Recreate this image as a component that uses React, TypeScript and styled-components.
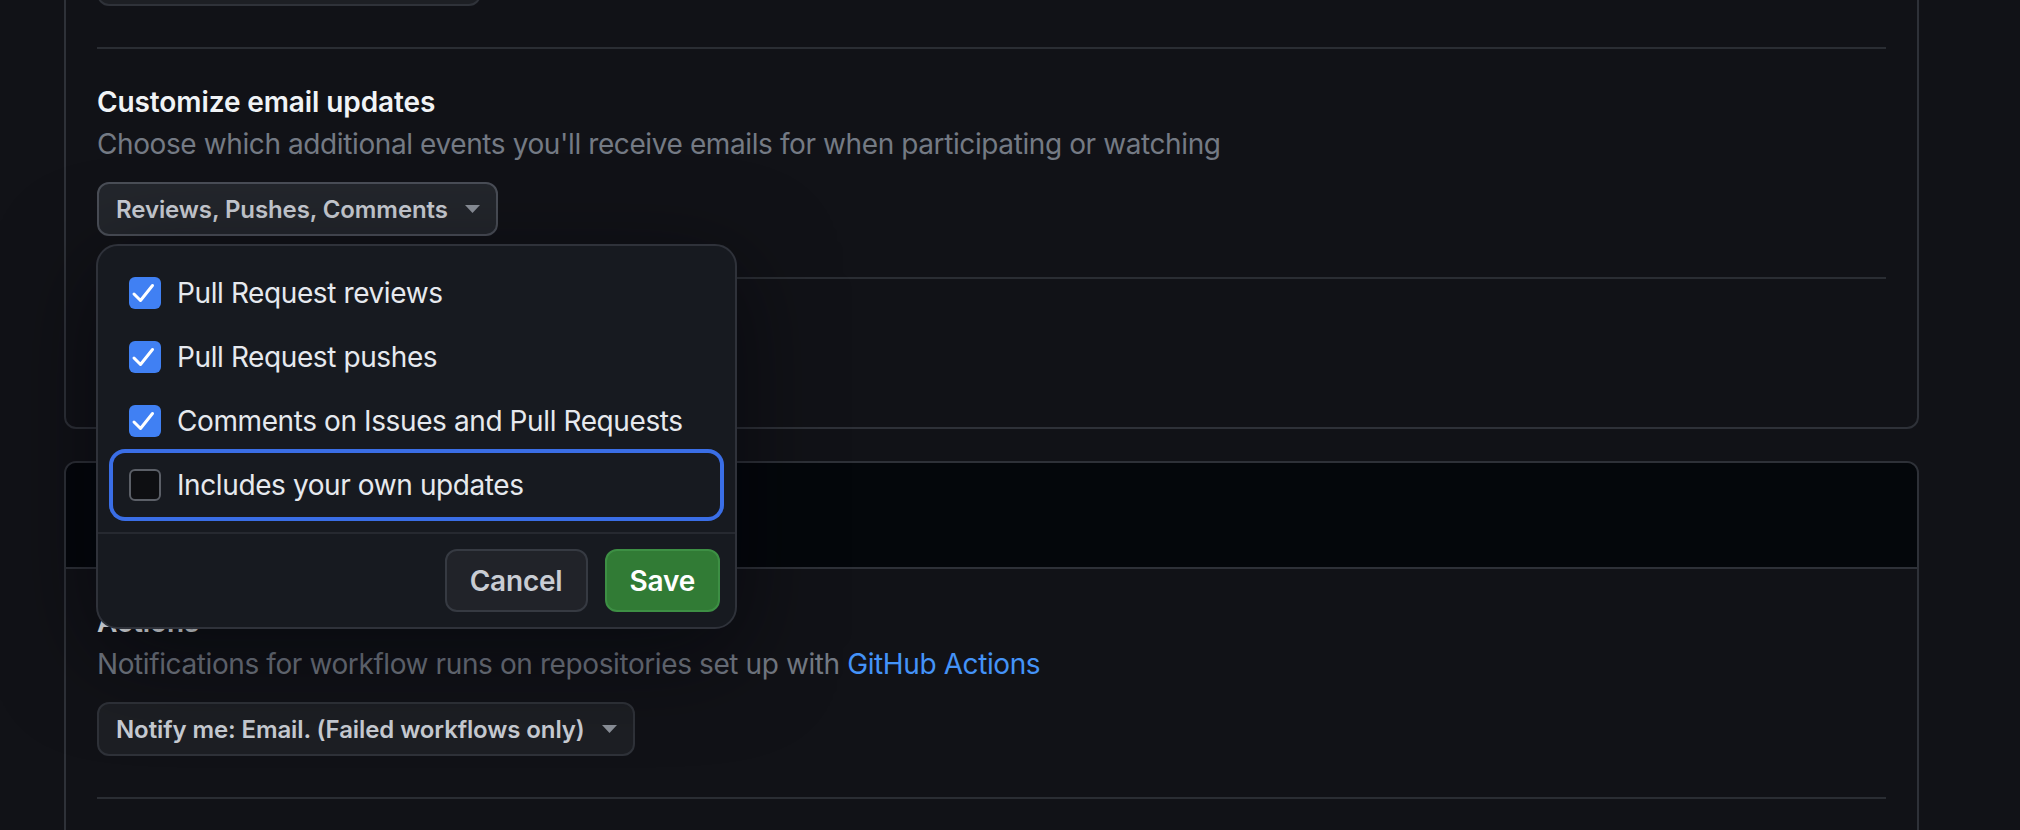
import React from "react";
import styled, { createGlobalStyle, css } from "styled-components";

const GlobalStyle = createGlobalStyle`
  html, body { margin: 0; padding: 0; background: #111217; }
  body {
    font-family: Inter, "Noto Sans", sans-serif;
    color: #e6e9ee;
    -webkit-font-smoothing: antialiased;
  }
  * { box-sizing: border-box; }
`;

const Page = styled.main`
  margin-top: -183px;
  padding: 0 101px 0 64px;
  display: flex;
  flex-direction: column;
  gap: 32px;
`;

const Card = styled.section`
  border: 2px solid #2e3138;
  border-radius: 12px;
  background: #111217;
`;

const CardHeader = styled.header`
  height: 106px;
  display: flex;
  align-items: center;
  padding: 0 31px;
  background: #04070b;
  border-bottom: 2px solid #2e3138;
  border-radius: 10px 10px 0 0;
`;

const CardTitle = styled.h2`
  margin: 0;
  font-size: 28px;
  font-weight: 600;
  color: #f0f3f6;
`;

const CardBody = styled.div`
  padding: 0 31px;
`;

const Section = styled.div`
  display: flex;
  flex-direction: column;
  align-items: flex-start;
  padding: 33px 0 41px;
  & + & {
    border-top: 2px solid #2a2d33;
  }
  &:last-child {
    padding-bottom: 31px;
  }
`;

const Heading = styled.h3`
  margin: 0;
  font-size: 28px;
  line-height: 40px;
  font-weight: 600;
  letter-spacing: -0.1px;
  color: #f0f3f6;
  white-space: nowrap;
`;

const Description = styled.p`
  margin: 0;
  font-size: 28px;
  line-height: 44px;
  letter-spacing: -0.4px;
  color: #747a84;
  white-space: nowrap;
`;

const Link = styled.a`
  color: #4493f8;
  text-decoration: none;
`;

const SelectWrap = styled.div`
  position: relative;
  margin-top: 16px;
`;

const SelectButton = styled.button<{ $open?: boolean }>`
  display: inline-flex;
  align-items: center;
  gap: 17px;
  height: 54px;
  padding: 0 16px 0 17px;
  border-radius: 12px;
  font-family: inherit;
  font-size: 24px;
  font-weight: 600;
  letter-spacing: -0.1px;
  color: #c9cdd4;
  cursor: pointer;
  white-space: nowrap;
  background: #1d1f24;
  border: 2px solid #2f3239;
  ${(p) =>
    p.$open &&
    css`
      background: #23262c;
      border-color: #4a4e57;
    `}
`;

const Caret = styled.svg`
  width: 15px;
  height: 8px;
  flex: none;
`;

const Overlay = styled.div`
  position: absolute;
  top: calc(100% + 8px);
  left: -1px;
  width: 641px;
  background: #171a20;
  border: 2px solid #2f323a;
  border-radius: 22px;
  box-shadow: 0 24px 96px rgba(1, 4, 9, 0.55);
  z-index: 10;
`;

const OptionList = styled.div`
  display: flex;
  flex-direction: column;
  padding: 15px 15px;
`;

const OptionRow = styled.label<{ $focused?: boolean }>`
  display: flex;
  align-items: center;
  gap: 16px;
  height: 64px;
  padding: 0 16px;
  border-radius: 12px;
  font-size: 28px;
  letter-spacing: -0.4px;
  color: #e6e9ee;
  white-space: nowrap;
  cursor: pointer;
  ${(p) =>
    p.$focused &&
    css`
      box-shadow: 0 0 0 4px #3a6ee6;
    `}
`;

const Box = styled.span<{ $checked?: boolean }>`
  width: 32px;
  height: 32px;
  flex: none;
  border-radius: 6px;
  display: flex;
  align-items: center;
  justify-content: center;
  ${(p) =>
    p.$checked
      ? css`
          background: #4080f3;
        `
      : css`
          background: #0e0f12;
          border: 2px solid #5b5f67;
        `}
`;

const Footer = styled.div`
  display: flex;
  justify-content: flex-end;
  gap: 17px;
  padding: 15px;
  border-top: 2px solid #262930;
`;

const FooterButton = styled.button<{ $primary?: boolean }>`
  height: 63px;
  padding: 0 23px;
  border-radius: 12px;
  font-family: inherit;
  font-size: 28px;
  font-weight: 600;
  letter-spacing: -0.2px;
  cursor: pointer;
  ${(p) =>
    p.$primary
      ? css`
          background: #317b35;
          border: 2px solid #3d8f44;
          color: #ffffff;
        `
      : css`
          background: #212329;
          border: 2px solid #363a42;
          color: #c9cdd4;
        `}
`;

const CaretIcon = () => (
  <Caret viewBox="0 0 15 8" aria-hidden>
    <polygon points="0,0 15,0 7.5,8" fill="#8b9099" />
  </Caret>
);

const CheckMark = () => (
  <svg width="32" height="32" viewBox="0 0 32 32" aria-hidden>
    <path
      d="M5 17 L11.5 23.5 L23.5 8.5"
      fill="none"
      stroke="#ffffff"
      strokeWidth="3"
      strokeLinecap="round"
      strokeLinejoin="round"
    />
  </svg>
);

const options = [
  { label: "Pull Request reviews", checked: true },
  { label: "Pull Request pushes", checked: true },
  { label: "Comments on Issues and Pull Requests", checked: true },
  { label: "Includes your own updates", checked: false, focused: true },
];

export default function App() {
  return (
    <>
      <GlobalStyle />
      <Page>
        <Card>
          <CardBody>
            <Section>
              <Heading>Participating, @mentions and custom</Heading>
              <Description>
                Notifications for the conversations you are participating in
              </Description>
              <SelectWrap>
                <SelectButton>
                  Notify me: on GitHub, Email
                  <CaretIcon />
                </SelectButton>
              </SelectWrap>
            </Section>
            <Section>
              <Heading>Customize email updates</Heading>
              <Description>
                Choose which additional events you'll receive emails for when participating or watching
              </Description>
              <SelectWrap>
                <SelectButton $open>
                  Reviews, Pushes, Comments
                  <CaretIcon />
                </SelectButton>
                <Overlay>
                  <OptionList>
                    {options.map((o) => (
                      <OptionRow key={o.label} $focused={o.focused}>
                        <Box $checked={o.checked}>{o.checked && <CheckMark />}</Box>
                        {o.label}
                      </OptionRow>
                    ))}
                  </OptionList>
                  <Footer>
                    <FooterButton>Cancel</FooterButton>
                    <FooterButton $primary>Save</FooterButton>
                  </Footer>
                </Overlay>
              </SelectWrap>
            </Section>
            <Section>
              <Heading>Ignored repositories</Heading>
              <Description>You'll never be notified.</Description>
            </Section>
          </CardBody>
        </Card>
        <Card>
          <CardHeader>
            <CardTitle>System</CardTitle>
          </CardHeader>
          <CardBody>
            <Section>
              <Heading>Actions</Heading>
              <Description>
                Notifications for workflow runs on repositories set up with{" "}
                <Link href="#">GitHub Actions</Link>
              </Description>
              <SelectWrap>
                <SelectButton>
                  Notify me: Email. (Failed workflows only)
                  <CaretIcon />
                </SelectButton>
              </SelectWrap>
            </Section>
            <Section>
              <Heading>Dependabot alerts: New vulnerabilities</Heading>
              <Description>When you're given access to Dependabot alerts automatically receive notifications</Description>
            </Section>
          </CardBody>
        </Card>
      </Page>
    </>
  );
}
